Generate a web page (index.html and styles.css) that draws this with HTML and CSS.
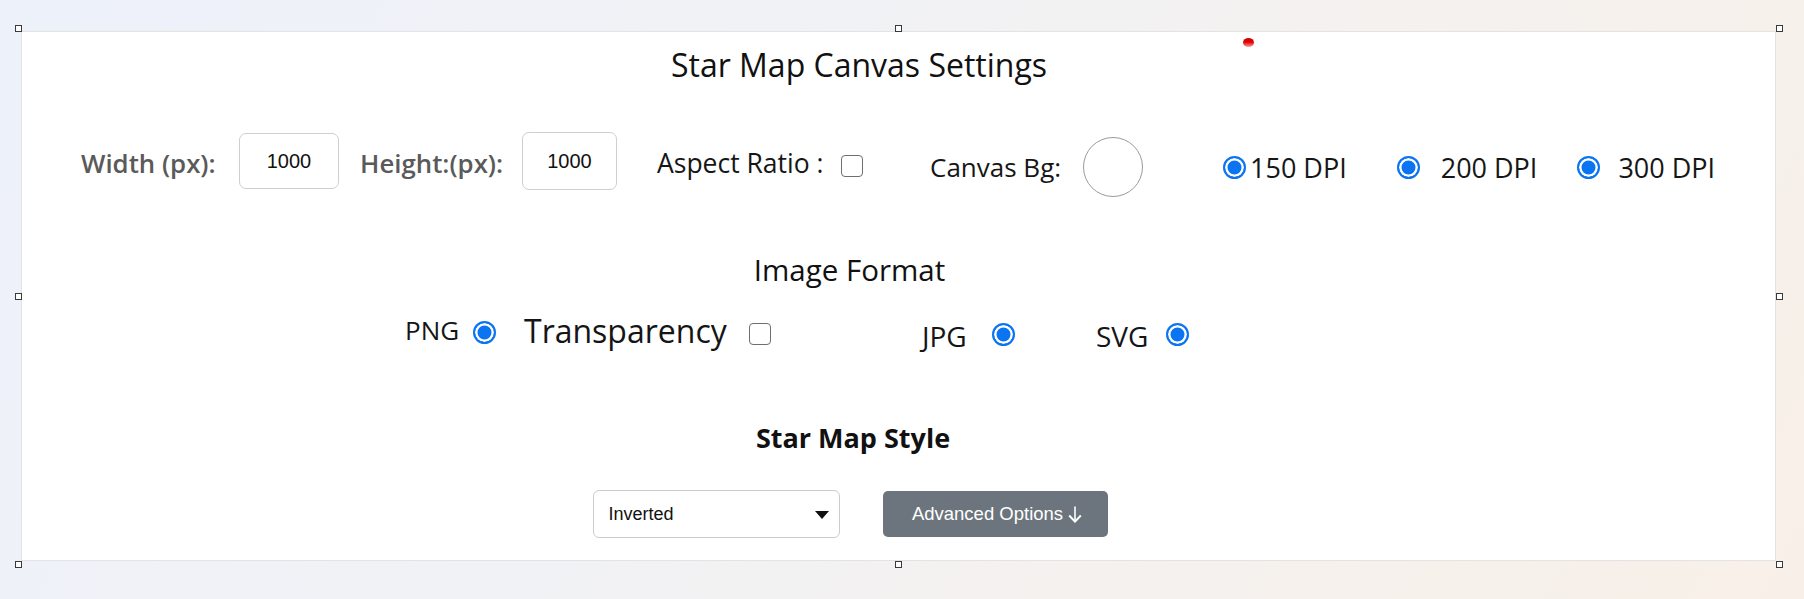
FILE: index.html
```html
<!DOCTYPE html>
<html lang="en">
<head>
<meta charset="utf-8">
<title>Star Map Canvas Settings</title>
<link rel="stylesheet" href="styles.css">
</head>
<body>
<div class="card">
  <h1 class="title">Star Map Canvas Settings</h1>

  <div class="row-size">
    <span class="lbl-strong w-width">Width (px):</span>
    <input class="num num-a" type="text" value="1000">
    <span class="lbl-strong w-height">Height:(px):</span>
    <input class="num num-b" type="text" value="1000">
    <span class="lbl w-aspect">Aspect Ratio :</span>
    <span class="check check-aspect"></span>
    <span class="lbl w-bg">Canvas Bg:</span>
    <span class="swatch"></span>
    <span class="radio dpi-r1"></span>
    <span class="lbl dpi dpi-t1">150 DPI</span>
    <span class="radio dpi-r2"></span>
    <span class="lbl dpi dpi-t2">200 DPI</span>
    <span class="radio dpi-r3"></span>
    <span class="lbl dpi dpi-t3">300 DPI</span>
  </div>

  <h2 class="sub">Image Format</h2>

  <div class="row-format">
    <span class="fmt fmt-png">PNG</span>
    <span class="radio r-png"></span>
    <span class="fmt fmt-trans">Transparency</span>
    <span class="check check-trans"></span>
    <span class="fmt fmt-jpg">JPG</span>
    <span class="radio r-jpg"></span>
    <span class="fmt fmt-svg">SVG</span>
    <span class="radio r-svg"></span>
  </div>

  <h3 class="style-title">Star Map Style</h3>

  <div class="row-style">
    <div class="select">
      <span>Inverted</span>
      <svg class="caret" width="14" height="8" viewBox="0 0 14 8"><polygon points="0,0 14,0 7,8" fill="#111"/></svg>
    </div>
    <button class="btn" type="button">Advanced Options
      <svg class="down" width="14" height="17" viewBox="0 0 14 17"><line x1="7" y1="0.5" x2="7" y2="16" stroke="#fff" stroke-width="1.6"/><polyline points="1.2,9.5 7,15.6 12.8,9.5" fill="none" stroke="#fff" stroke-width="2"/></svg>
    </button>
  </div>
</div>

<span class="handle h-tl"></span>
<span class="handle h-tm"></span>
<span class="handle h-tr"></span>
<span class="handle h-ml"></span>
<span class="handle h-mr"></span>
<span class="handle h-bl"></span>
<span class="handle h-bm"></span>
<span class="handle h-br"></span>
<span class="red-dot"></span>
</body>
</html>
```

FILE: styles.css
```css
html, body {
  margin: 0;
  height: 100%;
}
body {
  position: relative;
  width: 1804px;
  height: 599px;
  overflow: hidden;
  background: linear-gradient(120deg, #edf1fa 0%, #f1f2f5 40%, #f5f1ee 70%, #f8f0e8 100%);
  font-family: "Open Sans", "Noto Sans", sans-serif;
  color: #151515;
}
.card {
  box-sizing: border-box;
  margin: 31px 0 0 21px;
  width: 1755px;
  height: 530px;
  background: #fff;
  border: 1px solid #e3e3e3;
  padding: 11px 91px 0 0;
  display: flex;
  flex-direction: column;
}
.title {
  margin: 0;
  padding-left: 12px;
  font-size: 32px;
  line-height: 44px;
  font-weight: 400;
  text-align: center;
  color: #111;
}

/* Row 1 */
.row-size {
  margin-top: 42px;
  height: 64px;
  display: flex;
  align-items: center;
  padding-left: 59px;
}
.lbl, .lbl-strong {
  white-space: nowrap;
  font-size: 26px;
  line-height: 36px;
  flex: none;
  margin-top: 3px;
}
.lbl-strong {
  font-weight: 600;
  color: #5a5a5a;
  font-size: 25.8px;
}
.lbl { color: #161616; }
.w-width { width: 137px; }
.w-height { width: 148px; margin-left: 21px; }
.w-aspect { width: 175px; margin-left: 40px; font-size: 26.5px; }
.w-bg { width: 135px; margin-left: 67px; margin-top: 12px; }
.num {
  box-sizing: border-box;
  flex: none;
  height: 56px;
  border: 1px solid #cfcfcf;
  border-radius: 7px;
  background: #fff;
  font-family: "Liberation Sans", Arial, sans-serif;
  font-size: 20px;
  color: #111;
  text-align: center;
  padding: 0;
  outline: none;
}
.num-a { width: 100px; margin-left: 21px; }
.num-b { width: 95px; height: 58px; margin-left: 14px; }
.check {
  box-sizing: border-box;
  flex: none;
  width: 22px;
  height: 22px;
  border: 1.5px solid #6f6f6f;
  border-radius: 4px;
  background: #fff;
}
.check-aspect { margin-left: 9px; margin-top: 9px; }
.swatch {
  box-sizing: border-box;
  flex: none;
  width: 60px;
  height: 60px;
  border-radius: 50%;
  border: 1px solid #9a9a9a;
  margin-left: 18px;
  margin-top: 12px;
}
.radio {
  box-sizing: border-box;
  flex: none;
  width: 23px;
  height: 23px;
  border-radius: 50%;
  border: 2px solid #0b74f3;
  background: #0b74f3;
  box-shadow: inset 0 0 0 2.5px #fff;
}
.dpi { font-size: 27px; margin-top: 13px; }
.dpi-r1 { margin-left: 80px; margin-top: 12px; }
.dpi-t1 { margin-left: 4px; }
.dpi-r2 { margin-left: 50px; margin-top: 12px; }
.dpi-t2 { margin-left: 21px; }
.dpi-r3 { margin-left: 40px; margin-top: 12px; }
.dpi-t3 { margin-left: 18px; }

/* Row 2 */
.sub {
  margin: 58px 0 0;
  padding-right: 7px;
  font-size: 29.5px;
  line-height: 38px;
  font-weight: 400;
  text-align: center;
  color: #111;
}

/* Row 3 */
.row-format {
  margin-top: 21px;
  height: 44px;
  display: flex;
  align-items: center;
  padding-left: 383px;
}
.fmt {
  flex: none;
  white-space: nowrap;
  color: #151515;
}
.fmt-png { font-size: 26px; line-height: 36px; width: 53px; margin-bottom: 4px; }
.r-png { margin-left: 15px; }
.fmt-trans { font-size: 32px; line-height: 44px; width: 206px; margin-left: 28px; margin-bottom: 2px; }
.check-trans { margin-left: 19px; margin-top: 3px; }
.fmt-jpg { font-size: 28px; line-height: 38px; width: 48px; margin-left: 151px; margin-top: 8px; }
.r-jpg { margin-left: 22px; margin-top: 5px; }
.fmt-svg { font-size: 28px; line-height: 38px; width: 55px; margin-left: 81px; margin-top: 8px; }
.r-svg { margin-left: 15px; margin-top: 5px; }

/* Row 4 */
.style-title {
  margin: 65px 0 0;
  font-size: 27px;
  line-height: 37px;
  font-weight: 700;
  text-align: center;
  color: #111;
}

/* Row 5 */
.row-style {
  margin-top: 34px;
  height: 48px;
  display: flex;
  align-items: center;
  justify-content: center;
  gap: 43px;
  padding-right: 6px;
}
.select {
  box-sizing: border-box;
  width: 247px;
  height: 48px;
  border: 1px solid #cccccc;
  border-radius: 6px;
  background: #fff;
  display: flex;
  align-items: center;
  padding: 0 10px 0 15px;
  font-family: "Liberation Sans", Arial, sans-serif;
  font-size: 18px;
  color: #111;
}
.caret { margin-left: auto; margin-top: 1px; }
.btn {
  box-sizing: border-box;
  width: 225px;
  height: 46px;
  border: none;
  border-radius: 5px;
  background: #6c757d;
  color: #fff;
  font-family: "Liberation Sans", Arial, sans-serif;
  font-size: 18.5px;
  display: flex;
  align-items: center;
  justify-content: center;
  gap: 5px;
  padding: 0 0 0 4px;
}
.down { margin-top: 1px; }

/* Selection overlay */
.handle {
  position: absolute;
  box-sizing: border-box;
  width: 7px;
  height: 7px;
  border: 1px solid #3a3a3a;
  background: #fff;
}
.h-tl { left: 15px; top: 25px; }
.h-tm { left: 895px; top: 25px; }
.h-tr { left: 1776px; top: 25px; }
.h-ml { left: 15px; top: 293px; }
.h-mr { left: 1776px; top: 293px; }
.h-bl { left: 15px; top: 561px; }
.h-bm { left: 895px; top: 561px; }
.h-br { left: 1776px; top: 561px; }
.red-dot {
  position: absolute;
  left: 1243px;
  top: 38px;
  width: 11px;
  height: 9px;
  border-radius: 50%;
  background: linear-gradient(#d40000 0%, #e00000 45%, #f7a0a0 100%);
}
```
